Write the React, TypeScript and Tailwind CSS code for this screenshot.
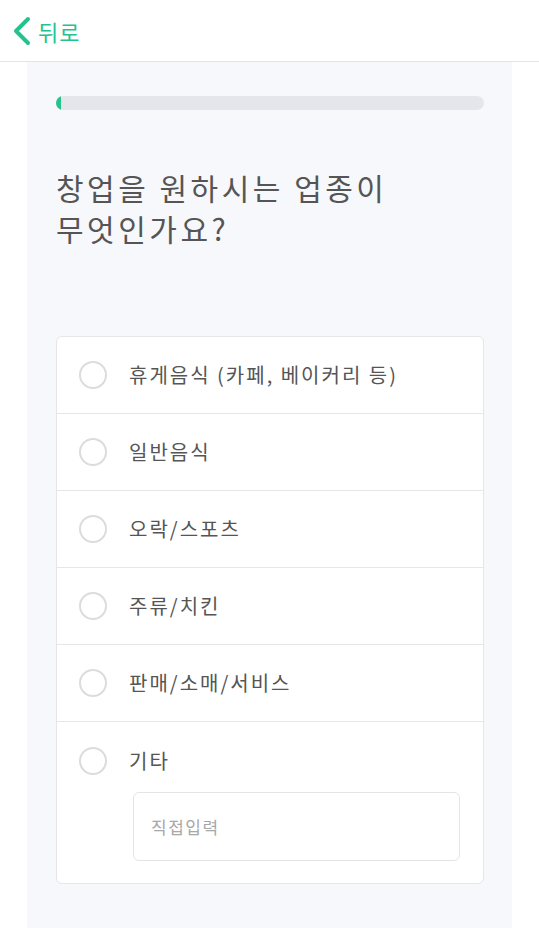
import React from 'react';

const options = [
  '휴게음식 (카페, 베이커리 등)',
  '일반음식',
  '오락/스포츠',
  '주류/치킨',
  '판매/소매/서비스',
];

const Radio = () => (
  <span className="w-[28px] h-[28px] rounded-full border-2 border-[#dcdcdc] bg-white shrink-0" />
);

export default function App() {
  return (
    <div className="w-[539px] min-h-[928px] bg-white flex flex-col" style={{ fontFamily: '"Noto Sans CJK KR", "Noto Sans", sans-serif' }}>
      <header className="h-[62px] border-b border-[#e4e4e4] flex items-center pl-[10px] shrink-0">
        <svg width="24" height="30" viewBox="0 0 24 30" fill="none" className="mr-[4px]">
          <path d="M18 3 L6 15 L18 27" stroke="#24c38b" strokeWidth="4" strokeLinecap="round" strokeLinejoin="round" />
        </svg>
        <span className="text-[22px] tracking-[1px] text-[#24c38b] leading-none">뒤로</span>
      </header>
      <main className="flex-1 mx-[27px] bg-[#f7f8fb] px-[29px] pt-[34px] pb-[40px]">
        <div className="h-[14px] w-[428px] rounded-full bg-[#e5e6eb] overflow-hidden">
          <div className="h-full w-[5px] rounded-l-full bg-[#24c38b]" />
        </div>
        <h1 className="mt-[57px] text-[30px] tracking-[3.5px] leading-[41px] text-[#555] font-normal">
          창업을 원하시는 업종이<br />무엇인가요?
        </h1>
        <div className="mt-[87px] w-[428px] bg-white border border-[#e6e6e6] rounded-[6px]">
          {options.map((o) => (
            <div key={o} className="h-[77px] border-b border-[#e6e6e6] flex items-center pl-[22px] gap-[22px]">
              <Radio />
              <span className="text-[20px] tracking-[2px] text-[#555]">{o}</span>
            </div>
          ))}
          <div className="pl-[22px] pt-[24px] pb-[22px]">
            <div className="flex items-center gap-[22px] h-[30px]">
              <Radio />
              <span className="text-[20px] tracking-[2px] text-[#555]">기타</span>
            </div>
            <div className="ml-[54px] mr-[23px] mt-[16px] h-[69px] border border-[#e4e4e4] rounded-[6px] flex items-center px-[17px]">
              <span className="text-[17px] tracking-[1.5px] text-[#a8a8a8]">직접입력</span>
            </div>
          </div>
        </div>
      </main>
    </div>
  );
}
